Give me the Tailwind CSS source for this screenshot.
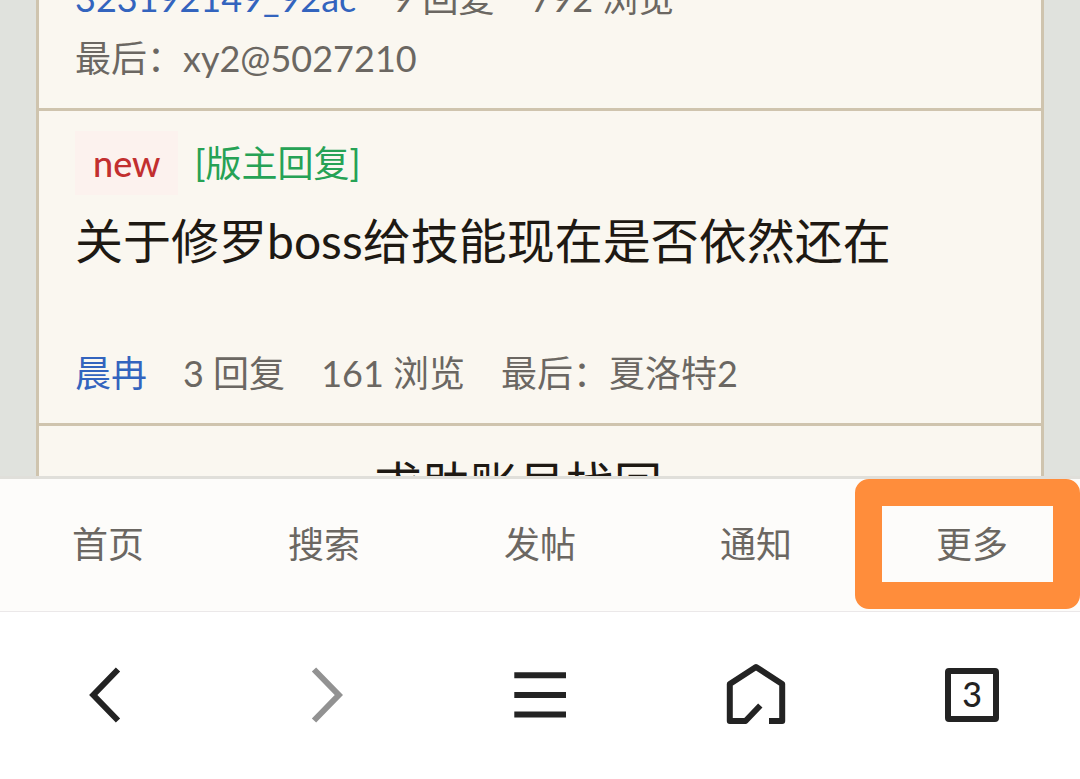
<!DOCTYPE html>
<html lang="zh-CN">
<head>
<meta charset="utf-8">
<meta name="viewport" content="width=device-width, initial-scale=1">
<title>论坛</title>
<script src="https://cdn.jsdelivr.net/npm/@tailwindcss/browser@4"></script>
</head>
<body class="flex h-screen flex-col overflow-hidden bg-[#e0e2dd] font-['Lato','Noto_Sans_CJK_SC',sans-serif] text-4xl text-[#6b6762]">
  <main class="min-h-0 flex-1 overflow-hidden px-9">
    <div class="-mt-16 border-x-3 border-[#cfc4ae] bg-[#faf7f0]">
      <article class="border-b-3 border-[#cfc4ae] px-9 pt-8 pb-5">
        <div class="flex flex-wrap gap-x-9 leading-[60px]">
          <a href="#" class="text-[#3364be]">323192149_92ac</a>
          <span>9 回复</span>
          <span>792 浏览</span>
          <span class="w-full">最后：xy2@5027210</span>
        </div>
      </article>
      <article class="border-b-3 border-[#cfc4ae] px-9 pt-5 pb-5">
        <div class="flex items-center gap-4 leading-[64px]">
          <span class="bg-[#fcf2ee] px-[18px] font-medium text-[#c22f2f]">new</span>
          <span class="text-[#26a255]">[版主回复]</span>
        </div>
        <h2 class="mt-3.5 min-h-[128px] text-5xl leading-[64px] text-[#1e1913]"><a href="#">关于修罗boss给技能现在是否依然还在</a></h2>
        <div class="mt-1.5 flex flex-wrap gap-x-9 leading-[60px]">
          <a href="#" class="text-[#3364be]">晨冉</a>
          <span>3 回复</span>
          <span>161 浏览</span>
          <span>最后：夏洛特2</span>
        </div>
      </article>
      <article class="px-9 pt-[26px] pb-4">
        <h2 class="pr-11 text-center text-5xl leading-[64px] text-[#1e1913]"><a href="#">求助账号找回</a></h2>
      </article>
    </div>
  </main>

  <nav class="relative grid h-[136px] shrink-0 grid-cols-5 border-t-3 border-b border-t-[#e0dfda] border-b-[#ebe8e9] bg-[#fdfcfa] pb-[3px]">
    <a href="#" class="flex items-center justify-center">首页</a>
    <a href="#" class="flex items-center justify-center">搜索</a>
    <a href="#" class="flex items-center justify-center">发帖</a>
    <a href="#" class="flex items-center justify-center">通知</a>
    <a href="#" class="flex items-center justify-center">更多</a>
    <span class="absolute top-0 right-0 h-[130px] w-[225px] rounded-[14px] border-[27px] border-[#ff8d3b]"></span>
  </nav>

  <footer class="grid h-[167px] shrink-0 grid-cols-5 items-center justify-items-center bg-white pb-0.5 text-[#232323]">
    <button type="button" aria-label="后退">
      <svg class="size-18" viewBox="0 0 72 72" fill="none" stroke="currentColor" stroke-width="6"><path d="M46 10.5 21.3 36 46 61.5"/></svg>
    </button>
    <button type="button" aria-label="前进" class="text-[#929292]">
      <svg class="size-18" viewBox="0 0 72 72" fill="none" stroke="currentColor" stroke-width="6"><path d="M26 10.5 50.8 36 26 61.5"/></svg>
    </button>
    <button type="button" aria-label="菜单">
      <svg class="size-18" viewBox="0 0 72 72" fill="none" stroke="currentColor" stroke-width="6"><path d="M10.3 16.3H62M10.3 36H62M10.3 55.6H62"/></svg>
    </button>
    <button type="button" aria-label="主页">
      <svg class="size-18" viewBox="0 0 72 72" fill="none" stroke="currentColor" stroke-width="6" stroke-linejoin="round"><path d="M40.3 46.5 25.5 62H9.8V25L36 8 62.2 25V62H49"/></svg>
    </button>
    <button type="button" aria-label="标签页" class="flex size-[54px] items-center justify-center rounded-sm border-6 border-[#232323] pb-0.5 text-[34px] leading-none font-medium">3</button>
  </footer>
</body>
</html>
